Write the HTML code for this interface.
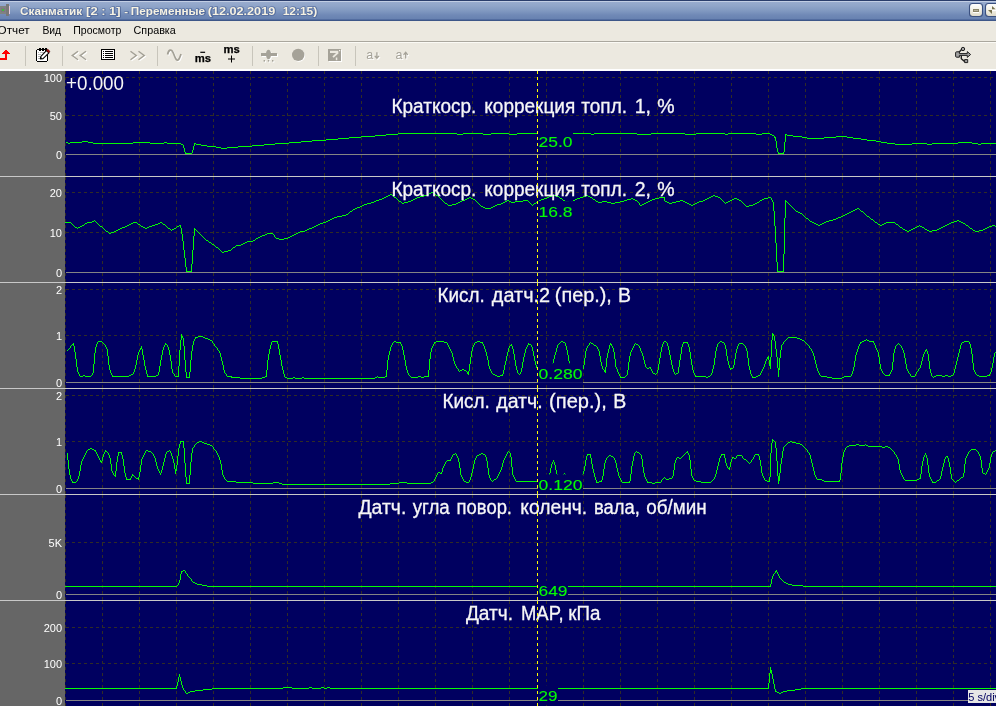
<!DOCTYPE html>
<html lang="ru"><head><meta charset="utf-8"><title>Сканматик</title>
<style>
html,body{margin:0;padding:0;background:#ece9e0;}
body{width:996px;height:706px;overflow:hidden;position:relative;font-family:"Liberation Sans",sans-serif;}
#title{position:absolute;left:0;top:0;width:996px;height:21px;background:linear-gradient(#2a3d6b 0,#2a3d6b 1px,#c2cee4 1px,#c2cee4 2px,#98abce 2px,#90a5c9 6px,#8098c0 11px,#7089b6 15px,#6882b1 19px,#536da0 19.5px,#3e5789 20px,#3e5789 21px);}
#title .t{position:absolute;left:21px;top:3px;font-size:11.5px;font-weight:bold;color:#f4f1e6;letter-spacing:-0.1px;white-space:nowrap;text-shadow:1px 1px 0 rgba(40,60,110,.6);}
#menu{position:absolute;left:0;top:21px;width:996px;height:20px;background:#ece9e0;font-size:11px;color:#000;}
#menu span{position:absolute;top:3px;white-space:nowrap;}
#sep1{position:absolute;left:0;top:41px;width:996px;height:1px;background:#aaa79e;}
#sep2{position:absolute;left:0;top:42px;width:996px;height:1px;background:#fbfaf5;z-index:1;}
#tool{position:absolute;left:0;top:42px;width:996px;height:27px;background:#ece9e0;}
#toolb{position:absolute;left:0;top:69px;width:996px;height:2px;background:#fff;}
#chart{position:absolute;left:0;top:71px;will-change:transform;}
#tb{will-change:transform;}
.vs{position:absolute;top:46px;width:1px;height:20px;background:#c9c6bc;}
</style></head><body>
<div id="title"></div>
<div id="menu"></div>
<div id="sep1"></div><div id="sep2"></div>
<div id="tool"></div>
<div id="toolb"></div>
<svg id="tb" width="996" height="71" viewBox="0 0 996 71" style="position:absolute;left:0;top:0">
<!-- title icon -->
<g shape-rendering="crispEdges"><rect x="0" y="6" width="6" height="8" fill="#828282"/><rect x="6" y="4" width="3" height="12" fill="#787878"/><rect x="9" y="6" width="1" height="8" fill="#e6cadf"/><rect x="1" y="8" width="4" height="4" fill="#7a6a80" opacity="0.5"/><rect x="2" y="9" width="2" height="2" fill="#3cc03c"/></g>
<g font-family="Liberation Sans, sans-serif" font-weight="bold" font-size="11.3">
<g fill="#3a5288" stroke="#3a5288" stroke-width="1.6" stroke-linejoin="round" opacity="0.55" transform="translate(-0.6,-0.6)"><text x="21.1" y="16" textLength="62.0" lengthAdjust="spacingAndGlyphs">Сканматик</text><text x="87.1" y="16" textLength="34.4" lengthAdjust="spacingAndGlyphs">[2 : 1]</text><text x="125.3" y="16">-</text><text x="131.8" y="16" textLength="74.3" lengthAdjust="spacingAndGlyphs">Переменные</text><text x="208.8" y="16" textLength="67.4" lengthAdjust="spacingAndGlyphs">(12.02.2019</text><text x="283.7" y="16" textLength="34.5" lengthAdjust="spacingAndGlyphs">12:15)</text></g>
<g fill="#f6f2e3"><text x="20.1" y="15" textLength="62.0" lengthAdjust="spacingAndGlyphs">Сканматик</text><text x="86.1" y="15" textLength="34.4" lengthAdjust="spacingAndGlyphs">[2 : 1]</text><text x="124.3" y="15">-</text><text x="130.8" y="15" textLength="74.3" lengthAdjust="spacingAndGlyphs">Переменные</text><text x="207.8" y="15" textLength="67.4" lengthAdjust="spacingAndGlyphs">(12.02.2019</text><text x="282.7" y="15" textLength="34.5" lengthAdjust="spacingAndGlyphs">12:15)</text></g>
</g>
<g font-family="Liberation Sans, sans-serif" font-size="11" fill="#000">
<text x="-2.4" y="34" textLength="32" lengthAdjust="spacingAndGlyphs">Отчет</text>
<text x="42.4" y="34" textLength="18.8" lengthAdjust="spacingAndGlyphs">Вид</text>
<text x="73.3" y="34" textLength="48" lengthAdjust="spacingAndGlyphs">Просмотр</text>
<text x="133.6" y="34" textLength="42.2" lengthAdjust="spacingAndGlyphs">Справка</text>
</g>
<!-- title buttons -->
<defs><linearGradient id="bg1" x1="0" y1="0" x2="0" y2="1"><stop offset="0" stop-color="#ffffff"/><stop offset="0.5" stop-color="#f3f1e6"/><stop offset="1" stop-color="#dcd8c6"/></linearGradient></defs>
<g>
<rect x="969.5" y="3.5" width="13" height="13" rx="3" ry="3" fill="url(#bg1)" stroke="#3a5080" stroke-width="1.1"/>
<rect x="973" y="9" width="6" height="3" fill="#8a8468"/>
<rect x="974" y="10" width="4" height="1" fill="#b4b09c"/>
<rect x="973" y="12" width="6" height="1" fill="#ffffff"/>
<rect x="985.5" y="3.5" width="13" height="13" rx="3" ry="3" fill="url(#bg1)" stroke="#3a5080" stroke-width="1.1"/>
<path d="M988 10 L992 10 L992 14 Z M992 6 L992 9.300 L995.500 9.300 Z" fill="#77724f"/>
<rect x="992" y="10" width="4" height="1" fill="#ffffff"/>
</g>
<!-- separators -->
<g stroke="#c8c5bb" stroke-width="1" shape-rendering="crispEdges">
<line x1="25.5" y1="46" x2="25.5" y2="66"/><line x1="62.5" y1="46" x2="62.5" y2="66"/><line x1="157.5" y1="46" x2="157.5" y2="66"/>
<line x1="252.5" y1="46" x2="252.5" y2="66"/><line x1="318.5" y1="46" x2="318.5" y2="66"/><line x1="355.5" y1="46" x2="355.5" y2="66"/>
</g>
<!-- red arrow -->
<g fill="#ff0000" shape-rendering="crispEdges"><rect x="5" y="50" width="2" height="1"/><rect x="4" y="51" width="4" height="1"/><rect x="3" y="52" width="6" height="1"/><rect x="2" y="53" width="8" height="1"/><rect x="5" y="54" width="2" height="6"/><rect x="0" y="58" width="7" height="2"/></g>
<!-- notepad -->
<g shape-rendering="crispEdges">
<rect x="37" y="50" width="10" height="11" fill="#ffffff"/>
<g fill="#000"><rect x="36" y="50" width="1" height="11"/><rect x="47" y="50" width="1" height="11"/><rect x="37" y="61" width="10" height="1"/><rect x="37" y="49" width="10" height="1"/>
<rect x="39" y="48" width="2" height="3"/><rect x="42" y="48" width="2" height="3"/><rect x="45" y="48" width="2" height="3"/></g>
<g fill="#b8b8b8"><rect x="38" y="52" width="1" height="1"/><rect x="40" y="52" width="4" height="1"/><rect x="38" y="54" width="3" height="1"/><rect x="38" y="56" width="2" height="1"/><rect x="38" y="58" width="2" height="1"/></g>
</g>
<path d="M40.3 58.9 L40.9 56.3 L46.4 50.6 L48.9 52.9 L43.1 58.6 Z" fill="#fff" stroke="#000" stroke-width="1.1" stroke-linejoin="round"/>
<path d="M40.2 59 L40.7 56.8 L42.4 58.6 Z" fill="#000"/>
<path d="M46.3 50.5 L47.7 49.1 L50 51.4 L48.8 52.9 Z" fill="#a00808" stroke="#300" stroke-width="0.5"/>
<!-- << >> -->
<g fill="none" stroke-width="1.4" stroke-linejoin="miter">
<g stroke="#ffffff" transform="translate(1,1)"><path d="M78 51.2 L72.2 55.6 L78 59.8 M86 51.2 L80.2 55.6 L86 59.8"/><path d="M130.5 51.2 L136.3 55.6 L130.5 59.8 M138.5 51.2 L144.3 55.6 L138.5 59.8"/></g>
<g stroke="#a3a095"><path d="M78 51.2 L72.2 55.6 L78 59.8 M86 51.2 L80.2 55.6 L86 59.8"/><path d="M130.5 51.2 L136.3 55.6 L130.5 59.8 M138.5 51.2 L144.3 55.6 L138.5 59.8"/></g>
</g>
<!-- list icon -->
<g shape-rendering="crispEdges">
<rect x="101" y="49" width="14" height="11" fill="#000"/>
<rect x="102" y="50" width="12" height="9" fill="#fff"/>
<rect x="103" y="51" width="1" height="1" fill="#000"/><rect x="105" y="51" width="8" height="1" fill="#000"/>
<rect x="103" y="53" width="1" height="1" fill="#000"/><rect x="105" y="53" width="8" height="1" fill="#000"/>
<rect x="103" y="55" width="1" height="1" fill="#000"/><rect x="105" y="55" width="8" height="1" fill="#000"/>
<rect x="103" y="57" width="1" height="1" fill="#000"/><rect x="105" y="57" width="8" height="1" fill="#000"/>
</g>
<!-- sine -->
<path d="M167.6 54.5 C168.6 49.5 171.3 48.3 173.3 53 C175 57.5 176.8 63 179.3 58.5 C180.2 56.5 180.6 55.5 181 54" fill="none" stroke="#fff" stroke-width="1.6" transform="translate(1,1)"/>
<path d="M167.6 54.5 C168.6 49.5 171.3 48.3 173.3 53 C175 57.5 176.8 63 179.3 58.5 C180.2 56.5 180.6 55.5 181 54" fill="none" stroke="#a3a095" stroke-width="1.7"/>
<!-- ms - -->
<g font-family="Liberation Sans, sans-serif" font-weight="bold" font-size="11.5" fill="#000" stroke="#000" stroke-width="0.25">
<rect x="200.3" y="51.7" width="4.8" height="1.2" fill="#000" stroke="none"/>
<text x="194.8" y="61.6" textLength="16.3" lengthAdjust="spacingAndGlyphs">ms</text>
<text x="223.6" y="52.6" textLength="16.3" lengthAdjust="spacingAndGlyphs">ms</text>
<rect x="228" y="58.5" width="7" height="1" fill="#000" stroke="none"/><rect x="231" y="55.5" width="1" height="7" fill="#000" stroke="none"/>
</g>
<!-- plane icon -->
<g fill="#ffffff" transform="translate(1,1)"><rect x="261" y="53" width="16" height="3"/><path d="M268.5 49.8 C270 49.8 271 51.5 271 54 C271 56.5 270.3 59.3 268.5 59.3 C266.7 59.3 266 56.5 266 54 C266 51.5 267 49.8 268.5 49.8 Z"/><rect x="263.6" y="60" width="1.4" height="1.6"/><rect x="267.8" y="60" width="1.4" height="1.6"/><rect x="272" y="60" width="1.4" height="1.6"/></g>
<g fill="#a5a298"><rect x="261" y="53" width="16" height="3"/><path d="M268.5 49.8 C270 49.8 271 51.5 271 54 C271 56.5 270.3 59.3 268.5 59.3 C266.7 59.3 266 56.5 266 54 C266 51.5 267 49.8 268.5 49.8 Z"/><rect x="263.6" y="60" width="1.4" height="1.6"/><rect x="267.8" y="60" width="1.4" height="1.6"/><rect x="272" y="60" width="1.4" height="1.6"/></g>
<circle cx="299" cy="55.8" r="6.1" fill="#ffffff"/>
<circle cx="298.2" cy="54.9" r="6.2" fill="#a5a298"/>
<!-- picture icon -->
<g>
<rect x="329" y="50" width="13" height="12" fill="#ffffff"/>
<rect x="328" y="49" width="13" height="12" fill="#a5a298"/>
<path d="M330 50.8 h8.3 v2.2 h-8.3 z" fill="#ece9e0"/>
<path d="M338 52.5 L333 57.2" stroke="#ece9e0" stroke-width="1.8" fill="none"/>
<rect x="335.8" y="57.5" width="1.5" height="2.7" fill="#ece9e0"/>
<rect x="339" y="50" width="1.2" height="1.2" fill="#f6f4ee"/>
</g>
<!-- a down / a up -->
<g font-family="Liberation Sans, sans-serif" font-size="12.6" font-weight="bold" fill="#ffffff" stroke="#ffffff" transform="translate(1,1)"><text x="366.3" y="58.6" stroke="none" font-weight="normal">a</text><text x="395.5" y="58.6" stroke="none" font-weight="normal">a</text>
<path d="M376.9 52.3 V58 M374.8 55.8 L376.9 58.3 L379 55.8" fill="none" stroke-width="1.3"/>
<path d="M405.7 58.6 V52.6 M403.6 54.8 L405.7 52.2 L407.8 54.8" fill="none" stroke-width="1.3"/></g>
<g font-family="Liberation Sans, sans-serif" font-size="12.6" font-weight="bold" fill="#a5a298" stroke="#a5a298"><text x="366.3" y="58.6" stroke="none" font-weight="normal">a</text><text x="395.5" y="58.6" stroke="none" font-weight="normal">a</text>
<path d="M376.9 52.3 V58 M374.8 55.8 L376.9 58.3 L379 55.8" fill="none" stroke-width="1.3"/>
<path d="M405.7 58.6 V52.6 M403.6 54.8 L405.7 52.2 L407.8 54.8" fill="none" stroke-width="1.3"/></g>
<!-- usb -->
<g stroke="#202020" stroke-width="1" fill="#a2a2a2" stroke-linejoin="round">
<path d="M959 52.3 L962.3 48.8" fill="none" stroke-width="1.4"/>
<path d="M961.3 55.5 V58.8 L964.8 61.6" fill="none" stroke-width="1.4"/>
<path d="M956.6 51.8 h2.8 v1.8 H967.3 V51.6 L970.6 54.5 L967.3 57.4 V55.4 H959.4 v1.8 h-2.8 q-1 0 -1 -1 v-3.400 q0 -1 1 -1 z"/>
<circle cx="963" cy="49" r="1.7"/>
<rect x="964.6" y="59.6" width="3.100" height="3"/>
</g>
</svg>

<svg id="chart" width="996" height="635" viewBox="0 0 996 635" shape-rendering="crispEdges">
<g transform="translate(0,-71)">
<rect x="0" y="71" width="65" height="635" fill="#666666"/>
<rect x="65" y="71" width="931" height="635" fill="#000060"/>
<path d="M65.5 71V176M102.5 71V176M139.5 71V176M176.5 71V176M213.5 71V176M250.5 71V176M287.5 71V176M324.5 71V176M361.5 71V176M398.5 71V176M435.5 71V176M472.5 71V176M509.5 71V176M546.5 71V176M583.5 71V176M620.5 71V176M657.5 71V176M694.5 71V176M731.5 71V176M768.5 71V176M805.5 71V176M842.5 71V176M879.5 71V176M916.5 71V176M953.5 71V176M990.5 71V176M65.5 177V282M102.5 177V282M139.5 177V282M176.5 177V282M213.5 177V282M250.5 177V282M287.5 177V282M324.5 177V282M361.5 177V282M398.5 177V282M435.5 177V282M472.5 177V282M509.5 177V282M546.5 177V282M583.5 177V282M620.5 177V282M657.5 177V282M694.5 177V282M731.5 177V282M768.5 177V282M805.5 177V282M842.5 177V282M879.5 177V282M916.5 177V282M953.5 177V282M990.5 177V282M65.5 283V388M102.5 283V388M139.5 283V388M176.5 283V388M213.5 283V388M250.5 283V388M287.5 283V388M324.5 283V388M361.5 283V388M398.5 283V388M435.5 283V388M472.5 283V388M509.5 283V388M546.5 283V388M583.5 283V388M620.5 283V388M657.5 283V388M694.5 283V388M731.5 283V388M768.5 283V388M805.5 283V388M842.5 283V388M879.5 283V388M916.5 283V388M953.5 283V388M990.5 283V388M65.5 389V494M102.5 389V494M139.5 389V494M176.5 389V494M213.5 389V494M250.5 389V494M287.5 389V494M324.5 389V494M361.5 389V494M398.5 389V494M435.5 389V494M472.5 389V494M509.5 389V494M546.5 389V494M583.5 389V494M620.5 389V494M657.5 389V494M694.5 389V494M731.5 389V494M768.5 389V494M805.5 389V494M842.5 389V494M879.5 389V494M916.5 389V494M953.5 389V494M990.5 389V494M65.5 495V600M102.5 495V600M139.5 495V600M176.5 495V600M213.5 495V600M250.5 495V600M287.5 495V600M324.5 495V600M361.5 495V600M398.5 495V600M435.5 495V600M472.5 495V600M509.5 495V600M546.5 495V600M583.5 495V600M620.5 495V600M657.5 495V600M694.5 495V600M731.5 495V600M768.5 495V600M805.5 495V600M842.5 495V600M879.5 495V600M916.5 495V600M953.5 495V600M990.5 495V600M65.5 601V706M102.5 601V706M139.5 601V706M176.5 601V706M213.5 601V706M250.5 601V706M287.5 601V706M324.5 601V706M361.5 601V706M398.5 601V706M435.5 601V706M472.5 601V706M509.5 601V706M546.5 601V706M583.5 601V706M620.5 601V706M657.5 601V706M694.5 601V706M731.5 601V706M768.5 601V706M805.5 601V706M842.5 601V706M879.5 601V706M916.5 601V706M953.5 601V706M990.5 601V706" fill="none" stroke="#302c26" stroke-width="1" stroke-dasharray="3 3"/>
<line x1="66" y1="77.5" x2="996" y2="77.5" stroke="#302c26" stroke-width="1" stroke-dasharray="3 3"/>
<line x1="66" y1="115.5" x2="996" y2="115.5" stroke="#302c26" stroke-width="1" stroke-dasharray="3 3"/>
<line x1="66" y1="192.5" x2="996" y2="192.5" stroke="#302c26" stroke-width="1" stroke-dasharray="3 3"/>
<line x1="66" y1="232.5" x2="996" y2="232.5" stroke="#302c26" stroke-width="1" stroke-dasharray="3 3"/>
<line x1="66" y1="289.5" x2="996" y2="289.5" stroke="#302c26" stroke-width="1" stroke-dasharray="3 3"/>
<line x1="66" y1="335.5" x2="996" y2="335.5" stroke="#302c26" stroke-width="1" stroke-dasharray="3 3"/>
<line x1="66" y1="395.5" x2="996" y2="395.5" stroke="#302c26" stroke-width="1" stroke-dasharray="3 3"/>
<line x1="66" y1="441.5" x2="996" y2="441.5" stroke="#302c26" stroke-width="1" stroke-dasharray="3 3"/>
<line x1="66" y1="542.5" x2="996" y2="542.5" stroke="#302c26" stroke-width="1" stroke-dasharray="3 3"/>
<line x1="66" y1="627.5" x2="996" y2="627.5" stroke="#302c26" stroke-width="1" stroke-dasharray="3 3"/>
<line x1="66" y1="663.5" x2="996" y2="663.5" stroke="#302c26" stroke-width="1" stroke-dasharray="3 3"/>
<line x1="66" y1="154.5" x2="996" y2="154.5" stroke="#848484" stroke-width="1"/>
<line x1="66" y1="272.5" x2="996" y2="272.5" stroke="#848484" stroke-width="1"/>
<line x1="66" y1="382.5" x2="996" y2="382.5" stroke="#848484" stroke-width="1"/>
<line x1="66" y1="488.5" x2="996" y2="488.5" stroke="#848484" stroke-width="1"/>
<line x1="66" y1="594.5" x2="996" y2="594.5" stroke="#848484" stroke-width="1"/>
<line x1="66" y1="700.5" x2="996" y2="700.5" stroke="#848484" stroke-width="1"/>
<g fill="none" stroke="#04fb04" stroke-width="1" shape-rendering="crispEdges">
<path d="M183.5 145v3M184.5 148v4M185.5 152v2M192.5 150v3M193.5 146v4M194.5 143v3M774.5 136v2M775.5 137v4M776.5 141v7M777.5 148v4M778.5 152v2M783.5 152v2M784.5 142v10M785.5 134v8M66 142.5h2M70 142.5h12M88 142.5h5M133 142.5h17M164 142.5h3M289 142.5h12M881 142.5h6M958 142.5h14M68 143.5h2M93 143.5h40M150 143.5h14M167 143.5h14M195 143.5h1M275 143.5h14M887 143.5h8M912 143.5h15M932 143.5h26M972 143.5h6M981 143.5h15M82 141.5h6M301 141.5h11M876 141.5h5M181 144.5h2M196 144.5h5M264 144.5h11M895 144.5h17M927 144.5h5M978 144.5h3M186 153.5h6M779 153.5h4M201 145.5h6M252 145.5h12M207 146.5h9M238 146.5h14M216 147.5h5M227 147.5h11M221 148.5h6M312 140.5h14M867 140.5h9M326 139.5h12M861 139.5h6M338 138.5h11M807 138.5h17M853 138.5h8M349 137.5h12M802 137.5h5M824 137.5h12M847 137.5h6M361 136.5h14M793 136.5h9M836 136.5h11M375 135.5h11M772 135.5h2M787 135.5h6M386 134.5h12M457 134.5h6M483 134.5h8M509 134.5h8M591 134.5h3M637 134.5h14M685 134.5h11M725 134.5h3M756 134.5h6M770 134.5h2M786 134.5h1M398 133.5h59M463 133.5h20M491 133.5h18M517 133.5h74M594 133.5h43M651 133.5h34M696 133.5h29M728 133.5h28M762 133.5h8"/>
<path d="M180.5 225v3M181.5 228v6M182.5 234v7M183.5 241v9M184.5 250v8M185.5 258v9M186.5 267v5M191.5 264v8M192.5 250v14M193.5 236v14M194.5 228v8M274.5 235v2M639.5 203v2M664.5 197v4M771.5 198v2M772.5 200v2M773.5 202v9M774.5 211v15M775.5 226v17M776.5 243v19M777.5 262v10M783.5 254v18M784.5 218v36M785.5 200v18M65 222.5h6M87 222.5h5M96 222.5h1M133 222.5h4M160 222.5h2M323 222.5h3M812 222.5h2M824 222.5h2M875 222.5h2M886 222.5h9M951 222.5h3M961 222.5h2M71 223.5h1M85 223.5h2M97 223.5h1M131 223.5h2M137 223.5h1M158 223.5h2M162 223.5h1M320 223.5h3M814 223.5h2M822 223.5h2M877 223.5h1M884 223.5h2M895 223.5h1M949 223.5h2M963 223.5h2M72 224.5h1M84 224.5h1M98 224.5h1M129 224.5h2M138 224.5h2M155 224.5h3M163 224.5h2M318 224.5h2M816 224.5h2M820 224.5h2M878 224.5h2M882 224.5h2M896 224.5h2M947 224.5h2M965 224.5h1M73 225.5h1M82 225.5h2M99 225.5h1M127 225.5h2M140 225.5h1M152 225.5h3M165 225.5h1M179 225.5h1M316 225.5h2M818 225.5h2M880 225.5h2M898 225.5h1M919 225.5h1M945 225.5h2M966 225.5h2M992 225.5h3M74 226.5h1M80 226.5h2M100 226.5h2M125 226.5h2M141 226.5h2M149 226.5h3M166 226.5h1M177 226.5h2M314 226.5h2M899 226.5h1M917 226.5h2M920 226.5h2M943 226.5h2M968 226.5h1M989 226.5h3M995 226.5h1M75 227.5h2M78 227.5h2M102 227.5h1M122 227.5h3M143 227.5h2M147 227.5h2M167 227.5h1M176 227.5h1M312 227.5h2M900 227.5h2M915 227.5h2M922 227.5h2M941 227.5h2M969 227.5h1M987 227.5h2M77 228.5h1M103 228.5h1M120 228.5h2M145 228.5h2M168 228.5h2M174 228.5h2M309 228.5h3M902 228.5h1M913 228.5h2M924 228.5h1M939 228.5h2M970 228.5h2M985 228.5h2M92 221.5h2M95 221.5h1M326 221.5h2M810 221.5h2M826 221.5h3M874 221.5h1M954 221.5h3M959 221.5h2M94 220.5h1M328 220.5h2M809 220.5h1M829 220.5h4M873 220.5h1M957 220.5h2M104 229.5h1M118 229.5h2M170 229.5h1M172 229.5h2M195 229.5h1M307 229.5h2M903 229.5h2M911 229.5h2M925 229.5h2M937 229.5h2M972 229.5h1M983 229.5h2M105 230.5h1M116 230.5h2M171 230.5h1M196 230.5h1M305 230.5h2M905 230.5h2M909 230.5h2M927 230.5h2M932 230.5h5M973 230.5h2M979 230.5h4M106 231.5h2M114 231.5h2M197 231.5h1M300 231.5h5M907 231.5h2M929 231.5h3M975 231.5h4M108 232.5h1M111 232.5h3M198 232.5h1M298 232.5h2M109 233.5h2M199 233.5h1M267 233.5h6M296 233.5h2M187 271.5h4M778 271.5h5M200 234.5h1M265 234.5h2M273 234.5h1M294 234.5h2M201 235.5h1M262 235.5h3M292 235.5h2M202 236.5h1M260 236.5h2M290 236.5h2M203 237.5h1M258 237.5h2M275 237.5h1M288 237.5h2M204 238.5h1M256 238.5h2M276 238.5h3M284 238.5h4M205 239.5h1M255 239.5h1M279 239.5h5M206 240.5h2M253 240.5h2M208 241.5h1M247 241.5h6M209 242.5h2M245 242.5h2M211 243.5h1M243 243.5h2M212 244.5h2M241 244.5h2M214 245.5h1M236 245.5h5M215 246.5h1M235 246.5h1M216 247.5h2M233 247.5h2M218 248.5h1M232 248.5h1M219 249.5h1M231 249.5h1M220 250.5h1M228 250.5h3M221 251.5h1M224 251.5h4M222 252.5h2M330 219.5h2M808 219.5h1M833 219.5h3M871 219.5h2M332 218.5h2M806 218.5h2M836 218.5h2M870 218.5h1M334 217.5h3M805 217.5h1M838 217.5h3M869 217.5h1M337 216.5h5M804 216.5h1M841 216.5h2M867 216.5h2M342 215.5h4M803 215.5h1M843 215.5h2M866 215.5h1M346 214.5h2M802 214.5h1M845 214.5h2M865 214.5h1M348 213.5h1M800 213.5h2M847 213.5h2M864 213.5h1M349 212.5h1M798 212.5h2M849 212.5h2M863 212.5h1M350 211.5h2M796 211.5h2M851 211.5h2M861 211.5h2M352 210.5h1M795 210.5h1M853 210.5h2M860 210.5h1M353 209.5h2M794 209.5h1M855 209.5h2M859 209.5h1M355 208.5h2M485 208.5h6M793 208.5h1M857 208.5h2M357 207.5h3M483 207.5h2M491 207.5h2M792 207.5h1M360 206.5h2M481 206.5h2M493 206.5h2M746 206.5h3M791 206.5h1M362 205.5h2M448 205.5h4M480 205.5h1M495 205.5h2M532 205.5h1M640 205.5h2M691 205.5h2M745 205.5h1M749 205.5h4M790 205.5h1M364 204.5h3M447 204.5h1M452 204.5h4M479 204.5h1M497 204.5h4M531 204.5h1M533 204.5h1M642 204.5h2M689 204.5h2M693 204.5h2M744 204.5h1M753 204.5h2M789 204.5h1M367 203.5h4M402 203.5h2M445 203.5h2M456 203.5h2M478 203.5h1M501 203.5h2M530 203.5h1M534 203.5h2M611 203.5h4M644 203.5h2M669 203.5h3M687 203.5h2M695 203.5h2M725 203.5h1M743 203.5h1M755 203.5h2M788 203.5h1M371 202.5h3M401 202.5h1M404 202.5h4M444 202.5h1M458 202.5h2M477 202.5h1M503 202.5h2M511 202.5h4M529 202.5h1M536 202.5h1M569 202.5h2M598 202.5h4M607 202.5h4M615 202.5h5M638 202.5h1M646 202.5h2M667 202.5h2M672 202.5h4M685 202.5h2M697 202.5h2M724 202.5h1M726 202.5h2M742 202.5h1M757 202.5h2M787 202.5h1M374 201.5h2M399 201.5h2M408 201.5h3M443 201.5h1M460 201.5h2M476 201.5h1M505 201.5h2M509 201.5h2M515 201.5h8M528 201.5h1M537 201.5h2M565 201.5h4M571 201.5h2M596 201.5h2M602 201.5h5M620 201.5h4M637 201.5h1M648 201.5h2M665 201.5h2M676 201.5h4M683 201.5h2M699 201.5h4M723 201.5h1M728 201.5h2M741 201.5h1M759 201.5h1M786 201.5h1M376 200.5h3M398 200.5h1M411 200.5h2M442 200.5h1M462 200.5h3M475 200.5h1M507 200.5h2M523 200.5h5M539 200.5h2M563 200.5h2M573 200.5h2M595 200.5h1M624 200.5h3M635 200.5h2M650 200.5h2M680 200.5h3M703 200.5h2M722 200.5h1M730 200.5h2M739 200.5h2M760 200.5h2M379 199.5h3M397 199.5h1M413 199.5h2M441 199.5h1M465 199.5h2M473 199.5h2M541 199.5h3M562 199.5h1M575 199.5h2M593 199.5h2M627 199.5h4M633 199.5h2M652 199.5h3M705 199.5h2M721 199.5h1M732 199.5h2M737 199.5h2M762 199.5h2M382 198.5h2M396 198.5h1M415 198.5h2M440 198.5h1M467 198.5h2M471 198.5h2M544 198.5h3M560 198.5h2M577 198.5h3M592 198.5h1M631 198.5h2M655 198.5h4M707 198.5h2M720 198.5h1M734 198.5h3M764 198.5h4M384 197.5h2M394 197.5h2M417 197.5h3M439 197.5h1M469 197.5h2M547 197.5h2M559 197.5h1M580 197.5h3M590 197.5h2M659 197.5h5M709 197.5h2M718 197.5h2M768 197.5h3M386 196.5h2M393 196.5h1M420 196.5h4M438 196.5h1M549 196.5h3M556 196.5h3M583 196.5h3M588 196.5h2M711 196.5h2M715 196.5h3M388 195.5h2M392 195.5h1M424 195.5h3M436 195.5h2M552 195.5h4M586 195.5h2M713 195.5h2M390 194.5h2M427 194.5h2M435 194.5h1M429 193.5h2M433 193.5h2M431 192.5h2"/>
<path d="M70.5 346v2M73.5 343v3M74.5 346v6M75.5 352v7M76.5 359v8M77.5 367v5M78.5 372v2M79.5 374v2M92.5 373v2M93.5 364v9M94.5 353v11M95.5 347v6M96.5 344v3M97.5 342v2M105.5 345v2M106.5 347v2M107.5 349v7M108.5 356v9M109.5 365v5M110.5 370v3M111.5 373v2M112.5 375v2M133.5 372v2M134.5 369v3M135.5 365v4M136.5 360v5M137.5 355v5M138.5 352v3M139.5 350v2M140.5 348v2M141.5 346v3M142.5 349v6M143.5 355v5M144.5 360v6M145.5 366v4M146.5 370v4M147.5 374v3M158.5 372v3M159.5 366v6M160.5 360v6M161.5 355v5M162.5 350v5M163.5 347v3M164.5 345v2M165.5 343v2M167.5 345v2M168.5 347v3M169.5 350v5M170.5 355v6M171.5 361v8M172.5 369v4M174.5 374v2M178.5 366v11M179.5 350v16M180.5 340v10M181.5 334v6M182.5 336v2M183.5 338v8M184.5 346v14M185.5 360v12M186.5 372v6M189.5 372v6M190.5 360v12M191.5 351v9M192.5 345v6M193.5 341v4M194.5 339v2M195.5 337v2M212.5 341v2M214.5 344v2M217.5 348v2M219.5 351v2M220.5 353v4M221.5 357v4M222.5 361v4M223.5 365v5M224.5 370v3M226.5 374v2M231.5 376v2M266.5 370v7M267.5 360v10M268.5 354v6M269.5 349v5M270.5 345v4M271.5 342v3M277.5 341v3M278.5 344v5M279.5 349v6M280.5 355v5M281.5 360v6M282.5 366v4M283.5 370v4M284.5 374v3M386.5 370v7M387.5 360v10M388.5 355v5M389.5 351v4M390.5 347v4M391.5 345v2M392.5 343v2M400.5 342v2M401.5 344v2M402.5 346v4M403.5 350v5M404.5 355v5M405.5 360v6M406.5 366v4M407.5 370v3M408.5 373v2M428.5 370v7M429.5 359v11M430.5 352v7M431.5 348v4M432.5 346v2M433.5 344v2M434.5 342v2M447.5 343v2M448.5 345v2M449.5 347v2M450.5 349v2M451.5 351v2M452.5 353v4M453.5 357v4M454.5 361v3M455.5 364v2M456.5 366v2M458.5 369v2M467.5 372v2M468.5 371v4M469.5 364v7M470.5 357v7M471.5 351v6M472.5 347v4M473.5 345v2M474.5 343v2M482.5 342v2M483.5 344v2M484.5 346v3M485.5 349v3M486.5 352v4M487.5 356v4M488.5 360v6M489.5 366v3M490.5 369v2M491.5 371v2M502.5 374v2M503.5 370v4M504.5 365v5M505.5 361v4M506.5 356v5M507.5 352v4M508.5 348v4M509.5 346v2M511.5 344v2M512.5 346v3M513.5 349v5M514.5 354v6M515.5 360v6M516.5 366v4M517.5 370v3M520.5 372v2M521.5 368v4M522.5 362v6M523.5 357v5M524.5 353v4M525.5 349v4M526.5 347v2M527.5 345v2M528.5 343v2M531.5 345v2M532.5 347v4M533.5 351v5M534.5 356v5M535.5 361v4M536.5 365v3M537.5 368v2M538.5 370v2M539.5 372v2M540.5 374v2M550.5 371v2M551.5 367v4M552.5 363v4M553.5 359v4M554.5 355v4M555.5 352v3M556.5 348v4M557.5 345v3M565.5 343v3M566.5 346v4M567.5 350v5M568.5 355v6M569.5 361v5M570.5 366v5M571.5 371v3M580.5 373v2M581.5 371v2M582.5 369v2M583.5 365v4M584.5 358v7M585.5 351v7M586.5 348v3M587.5 346v2M589.5 343v2M597.5 347v2M598.5 349v2M599.5 351v5M600.5 356v6M601.5 362v4M602.5 366v3M604.5 370v2M605.5 367v6M606.5 358v9M607.5 353v5M608.5 349v4M609.5 345v4M610.5 343v2M611.5 344v2M612.5 346v2M613.5 348v4M614.5 352v7M615.5 359v8M616.5 367v2M617.5 369v3M618.5 372v2M619.5 374v2M620.5 376v2M627.5 370v5M628.5 362v8M629.5 356v6M630.5 352v4M631.5 350v2M632.5 348v2M633.5 346v2M634.5 344v2M639.5 346v2M640.5 348v3M641.5 351v2M642.5 353v3M643.5 356v4M644.5 360v4M645.5 364v3M650.5 367v2M651.5 369v2M652.5 371v2M657.5 370v3M658.5 364v6M659.5 358v6M660.5 352v6M661.5 347v5M662.5 344v3M663.5 342v2M667.5 343v3M668.5 346v4M669.5 350v5M670.5 355v5M671.5 360v5M672.5 365v4M673.5 369v3M674.5 372v2M678.5 367v6M679.5 360v7M680.5 354v6M681.5 347v7M682.5 344v3M683.5 342v2M687.5 342v2M688.5 344v3M689.5 347v5M690.5 352v7M691.5 359v6M692.5 365v5M693.5 370v3M694.5 373v2M695.5 375v2M711.5 373v2M712.5 369v4M713.5 365v4M714.5 358v7M715.5 351v7M716.5 347v4M717.5 344v3M724.5 343v2M725.5 345v4M726.5 349v7M727.5 356v5M728.5 361v4M729.5 365v3M730.5 368v2M733.5 365v3M734.5 359v6M735.5 353v6M736.5 349v4M737.5 346v3M738.5 344v2M745.5 346v2M746.5 348v3M747.5 351v7M748.5 358v8M749.5 366v4M750.5 370v4M751.5 374v2M752.5 376v2M760.5 373v2M761.5 371v2M762.5 369v2M763.5 367v2M764.5 364v3M765.5 361v3M766.5 359v2M767.5 357v2M768.5 356v4M769.5 360v6M770.5 357v12M771.5 340v17M772.5 333v7M773.5 334v2M774.5 336v5M775.5 341v8M776.5 349v8M777.5 357v11M778.5 368v9M779.5 358v12M780.5 350v8M781.5 345v5M783.5 342v2M809.5 346v2M811.5 349v2M812.5 351v2M813.5 353v3M814.5 356v4M815.5 360v4M816.5 364v4M817.5 368v3M818.5 371v2M819.5 373v2M851.5 374v2M852.5 371v3M853.5 367v4M854.5 361v6M855.5 355v6M856.5 352v3M857.5 349v3M858.5 346v3M859.5 344v2M860.5 342v2M873.5 341v2M874.5 343v2M875.5 345v3M876.5 348v2M877.5 350v2M878.5 352v5M879.5 357v7M880.5 364v5M881.5 369v2M882.5 371v2M889.5 374v2M890.5 372v2M891.5 370v2M892.5 362v8M893.5 353v9M894.5 349v4M895.5 346v3M901.5 346v2M902.5 348v2M903.5 350v3M904.5 353v5M905.5 358v6M906.5 364v5M907.5 369v2M908.5 371v2M910.5 374v2M915.5 374v2M916.5 372v2M918.5 369v2M920.5 365v3M921.5 361v4M922.5 357v4M923.5 354v3M924.5 352v2M925.5 350v2M926.5 349v2M927.5 351v3M928.5 354v7M929.5 361v8M930.5 369v4M931.5 373v3M953.5 373v2M954.5 369v4M955.5 365v4M956.5 361v4M957.5 357v4M958.5 353v4M959.5 349v4M960.5 345v4M961.5 343v2M969.5 342v2M970.5 344v4M971.5 348v6M972.5 354v9M973.5 363v7M974.5 370v2M975.5 372v2M989.5 374v2M990.5 372v2M991.5 368v4M992.5 363v5M993.5 357v6M994.5 353v4M67 350.5h1M218 350.5h1M68 349.5h1M69 348.5h1M810 348.5h1M71 345.5h1M510 345.5h1M588 345.5h1M594 345.5h2M638 345.5h1M744 345.5h1M808 345.5h1M896 345.5h1M900 345.5h1M72 344.5h1M104 344.5h1M166 344.5h1M529 344.5h2M558 344.5h1M593 344.5h1M636 344.5h2M743 344.5h1M782 344.5h1M807 344.5h1M897 344.5h1M899 344.5h1M80 376.5h3M85 376.5h6M113 376.5h16M148 376.5h8M175 376.5h3M227 376.5h4M265 376.5h1M377 376.5h1M385 376.5h1M410 376.5h1M418 376.5h3M424 376.5h4M497 376.5h3M542 376.5h2M546 376.5h1M575 376.5h1M577 376.5h1M625 376.5h1M696 376.5h10M708 376.5h2M756 376.5h2M821 376.5h6M844 376.5h7M911 376.5h4M932 376.5h1M934 376.5h2M942 376.5h3M948 376.5h3M979 376.5h8M83 375.5h2M91 375.5h1M129 375.5h2M156 375.5h2M409 375.5h1M495 375.5h2M500 375.5h2M541 375.5h1M547 375.5h1M573 375.5h2M578 375.5h2M626 375.5h1M710 375.5h1M758 375.5h2M820 375.5h1M885 375.5h4M936 375.5h6M945 375.5h3M951 375.5h2M977 375.5h2M987 375.5h2M98 341.5h4M272 341.5h5M394 341.5h2M436 341.5h8M477 341.5h3M561 341.5h2M664 341.5h2M720 341.5h2M784 341.5h1M804 341.5h1M862 341.5h2M869 341.5h4M964 341.5h5M102 342.5h1M393 342.5h1M396 342.5h4M435 342.5h1M444 342.5h3M475 342.5h2M480 342.5h2M560 342.5h1M563 342.5h2M590 342.5h1M666 342.5h1M684 342.5h3M719 342.5h1M722 342.5h2M805 342.5h1M861 342.5h1M962 342.5h2M103 343.5h1M213 343.5h1M559 343.5h1M591 343.5h2M635 343.5h1M718 343.5h1M739 343.5h4M806 343.5h1M898 343.5h1M131 374.5h2M493 374.5h2M519 374.5h1M548 374.5h1M572 374.5h1M655 374.5h1M675 374.5h1M884 374.5h1M976 374.5h1M173 373.5h1M225 373.5h1M492 373.5h1M518 373.5h1M549 373.5h1M653 373.5h2M656 373.5h1M676 373.5h2M883 373.5h1M909 373.5h1M187 377.5h2M232 377.5h8M262 377.5h3M285 377.5h2M293 377.5h2M302 377.5h2M375 377.5h2M378 377.5h7M411 377.5h7M421 377.5h3M544 377.5h2M576 377.5h1M621 377.5h4M706 377.5h2M753 377.5h3M827 377.5h5M842 377.5h2M933 377.5h1M196 337.5h2M203 337.5h2M788 337.5h9M198 336.5h5M205 338.5h3M787 338.5h1M797 338.5h3M208 339.5h2M786 339.5h1M800 339.5h2M866 339.5h1M210 340.5h2M785 340.5h1M802 340.5h2M864 340.5h2M867 340.5h2M215 346.5h1M596 346.5h1M216 347.5h1M240 378.5h22M287 378.5h6M295 378.5h7M304 378.5h71M832 378.5h10M457 368.5h1M647 368.5h2M731 368.5h2M919 368.5h1M459 371.5h1M466 371.5h1M917 371.5h1M460 370.5h2M464 370.5h2M462 369.5h2M603 369.5h1M646 367.5h1M649 367.5h1M995 352.5h1"/>
<path d="M67.5 453v7M68.5 460v9M69.5 469v6M70.5 475v4M71.5 479v2M72.5 481v2M77.5 479v2M78.5 476v3M79.5 471v5M80.5 465v6M81.5 461v4M82.5 459v2M83.5 457v2M84.5 455v2M85.5 453v2M86.5 451v2M95.5 450v2M96.5 452v2M97.5 454v2M98.5 456v2M99.5 458v2M100.5 460v2M101.5 461v2M102.5 457v4M103.5 454v3M104.5 452v2M105.5 450v2M108.5 453v2M109.5 455v3M110.5 458v6M111.5 464v7M112.5 471v2M113.5 473v2M115.5 471v6M116.5 462v9M117.5 456v6M118.5 452v4M121.5 452v3M122.5 455v4M123.5 459v7M124.5 466v7M125.5 473v4M126.5 477v3M130.5 478v2M131.5 476v2M132.5 474v2M138.5 477v3M139.5 472v5M140.5 465v7M141.5 459v6M142.5 457v2M143.5 455v2M144.5 453v2M145.5 451v2M153.5 454v2M154.5 456v2M155.5 458v4M156.5 462v4M157.5 466v3M158.5 469v2M159.5 471v2M160.5 473v2M161.5 470v3M162.5 466v4M163.5 462v4M164.5 458v4M165.5 454v4M166.5 452v2M170.5 451v2M171.5 453v3M172.5 456v3M173.5 459v4M174.5 463v6M175.5 469v5M176.5 465v6M177.5 456v9M178.5 448v8M179.5 444v4M180.5 441v3M183.5 441v7M184.5 448v15M185.5 463v14M186.5 477v7M189.5 475v9M190.5 462v13M191.5 453v9M192.5 448v5M194.5 445v2M213.5 447v2M216.5 451v2M217.5 453v2M218.5 455v2M219.5 457v3M220.5 460v4M221.5 464v6M222.5 470v5M223.5 475v2M224.5 477v2M434.5 479v2M435.5 477v2M436.5 475v2M437.5 473v2M441.5 472v2M442.5 468v4M443.5 466v2M444.5 464v2M445.5 462v2M450.5 459v2M451.5 457v2M452.5 455v2M456.5 454v2M457.5 456v2M458.5 458v4M459.5 462v6M460.5 468v7M461.5 475v2M462.5 477v2M463.5 479v2M469.5 480v2M470.5 477v3M471.5 473v4M472.5 469v4M473.5 464v5M474.5 460v4M475.5 458v2M476.5 456v2M485.5 455v2M486.5 457v4M487.5 461v7M488.5 468v7M489.5 475v3M490.5 478v2M497.5 476v2M498.5 474v2M499.5 472v2M500.5 470v2M501.5 467v3M502.5 463v4M503.5 460v3M504.5 458v2M505.5 456v2M506.5 454v2M507.5 452v2M510.5 453v4M511.5 457v10M512.5 467v8M513.5 475v2M514.5 477v2M515.5 479v2M549.5 473v2M550.5 468v5M551.5 464v4M552.5 462v2M553.5 460v2M554.5 462v3M555.5 465v5M556.5 470v4M565.5 474v2M568.5 478v2M579.5 479v2M581.5 476v2M582.5 474v2M583.5 471v3M584.5 466v5M585.5 460v6M586.5 456v4M587.5 454v2M590.5 454v4M591.5 458v6M592.5 464v5M593.5 469v4M594.5 473v4M595.5 477v3M596.5 480v3M601.5 480v2M602.5 476v4M603.5 469v7M604.5 463v6M605.5 460v3M606.5 458v2M614.5 458v2M615.5 460v3M616.5 463v5M617.5 468v4M618.5 472v4M619.5 476v2M620.5 478v2M621.5 480v2M629.5 481v2M630.5 474v7M631.5 466v8M632.5 461v5M633.5 456v5M634.5 453v3M641.5 455v4M642.5 459v8M643.5 467v6M644.5 473v4M645.5 477v2M646.5 479v2M647.5 481v2M661.5 480v2M672.5 476v2M673.5 470v6M674.5 463v7M675.5 460v3M676.5 458v2M687.5 451v2M688.5 453v2M689.5 455v5M690.5 460v9M691.5 469v7M692.5 476v2M693.5 478v2M714.5 477v2M715.5 474v3M716.5 470v4M717.5 466v4M718.5 462v4M719.5 458v4M720.5 456v2M721.5 454v2M724.5 454v4M725.5 458v5M726.5 463v3M727.5 466v2M729.5 467v3M730.5 462v5M731.5 459v3M732.5 457v2M736.5 456v2M742.5 456v2M751.5 460v2M753.5 457v2M754.5 455v2M758.5 454v2M759.5 456v4M760.5 460v6M761.5 466v7M762.5 473v3M763.5 476v2M764.5 478v2M769.5 477v5M770.5 453v24M771.5 443v10M772.5 439v4M775.5 442v6M776.5 448v13M777.5 461v15M778.5 476v8M779.5 473v8M780.5 464v9M781.5 458v6M782.5 451v7M783.5 447v4M807.5 450v2M809.5 453v2M810.5 455v4M811.5 459v4M812.5 463v4M813.5 467v4M814.5 471v4M815.5 475v2M816.5 477v2M839.5 480v2M840.5 473v7M841.5 463v10M842.5 457v6M843.5 452v5M844.5 450v2M845.5 448v2M894.5 452v2M896.5 455v2M897.5 457v2M898.5 459v5M899.5 464v6M900.5 470v3M901.5 473v2M902.5 475v2M903.5 477v2M920.5 474v5M921.5 466v8M922.5 461v5M923.5 457v4M924.5 455v2M925.5 453v2M926.5 455v3M927.5 458v7M928.5 465v8M929.5 473v4M930.5 477v2M931.5 479v2M932.5 481v2M940.5 476v3M941.5 471v5M942.5 467v4M943.5 463v4M944.5 459v4M945.5 457v2M947.5 456v2M948.5 458v4M949.5 462v5M950.5 467v7M951.5 474v5M963.5 473v4M964.5 464v9M965.5 458v6M966.5 456v2M967.5 454v2M968.5 452v2M978.5 452v2M979.5 454v2M980.5 456v4M981.5 460v8M982.5 468v5M986.5 472v2M987.5 470v2M988.5 468v2M989.5 463v5M990.5 457v6M991.5 454v3M992.5 452v2M73 482.5h3M236 482.5h17M273 482.5h6M399 482.5h8M431 482.5h2M466 482.5h3M597 482.5h2M622 482.5h7M648 482.5h4M655 482.5h6M701 482.5h10M933 482.5h3M955 482.5h1M76 481.5h1M227 481.5h9M433 481.5h1M464 481.5h2M492 481.5h1M516 481.5h25M570 481.5h9M599 481.5h2M696 481.5h5M711 481.5h1M767 481.5h2M824 481.5h15M936 481.5h1M954 481.5h1M956 481.5h1M87 450.5h1M94 450.5h1M146 450.5h2M169 450.5h1M215 450.5h1M892 450.5h1M970 450.5h1M976 450.5h1M995 450.5h1M88 449.5h2M92 449.5h2M214 449.5h1M806 449.5h1M891 449.5h1M971 449.5h5M90 448.5h2M805 448.5h1M890 448.5h1M106 451.5h1M148 451.5h3M167 451.5h2M508 451.5h1M636 451.5h1M893 451.5h1M969 451.5h1M977 451.5h1M993 451.5h2M107 452.5h1M119 452.5h2M151 452.5h1M509 452.5h1M635 452.5h1M637 452.5h2M686 452.5h1M808 452.5h1M114 475.5h1M133 475.5h1M548 475.5h1M558 475.5h5M127 479.5h3M225 479.5h1M494 479.5h2M543 479.5h2M662 479.5h1M666 479.5h3M713 479.5h1M817 479.5h5M904 479.5h1M917 479.5h2M939 479.5h1M952 479.5h1M959 479.5h1M134 476.5h1M547 476.5h1M566 476.5h1M135 477.5h1M546 477.5h1M567 477.5h1M664 477.5h1M961 477.5h2M136 478.5h2M496 478.5h1M545 478.5h1M580 478.5h1M663 478.5h1M665 478.5h1M669 478.5h3M919 478.5h1M960 478.5h1M152 453.5h1M455 453.5h1M481 453.5h2M639 453.5h1M685 453.5h1M181 441.5h2M199 441.5h3M774 441.5h1M790 441.5h2M187 483.5h2M253 483.5h20M279 483.5h3M390 483.5h9M407 483.5h24M652 483.5h3M193 447.5h1M804 447.5h1M846 447.5h1M882 447.5h3M888 447.5h2M195 444.5h1M207 444.5h3M786 444.5h1M800 444.5h2M856 444.5h3M865 444.5h1M196 443.5h1M204 443.5h3M787 443.5h1M796 443.5h4M197 442.5h2M202 442.5h2M788 442.5h2M792 442.5h4M210 445.5h2M785 445.5h1M802 445.5h1M849 445.5h7M859 445.5h6M866 445.5h2M212 446.5h1M784 446.5h1M803 446.5h1M847 446.5h2M868 446.5h14M885 446.5h3M226 480.5h1M491 480.5h1M493 480.5h1M541 480.5h2M569 480.5h1M694 480.5h2M712 480.5h1M765 480.5h2M822 480.5h2M905 480.5h12M937 480.5h2M953 480.5h1M957 480.5h2M282 484.5h108M438 472.5h2M440 473.5h1M564 473.5h1M983 473.5h2M446 461.5h1M747 461.5h1M447 460.5h3M746 460.5h1M453 454.5h2M479 454.5h2M483 454.5h2M588 454.5h2M640 454.5h1M684 454.5h1M722 454.5h2M755 454.5h3M895 454.5h1M477 455.5h2M609 455.5h2M683 455.5h1M737 455.5h5M557 474.5h1M563 474.5h1M985 474.5h1M607 457.5h1M613 457.5h1M677 457.5h2M681 457.5h1M733 457.5h1M608 456.5h1M611 456.5h2M682 456.5h1M946 456.5h1M679 458.5h2M734 458.5h2M743 458.5h1M728 468.5h1M744 459.5h2M752 459.5h1M748 462.5h1M750 462.5h1M749 463.5h1M773 440.5h1"/>
<path d="M178.5 583v2M179.5 580v3M180.5 574v6M181.5 571v3M185.5 571v2M187.5 574v2M191.5 579v2M770.5 584v3M771.5 579v5M772.5 576v3M773.5 574v2M775.5 571v2M776.5 570v2M777.5 572v2M778.5 574v2M779.5 576v2M65 586.5h112M207 586.5h563M803 586.5h193M177 585.5h1M202 585.5h5M792 585.5h11M182 571.5h1M183 570.5h2M186 573.5h1M774 573.5h1M188 576.5h1M189 577.5h1M190 578.5h1M780 578.5h1M192 581.5h1M783 581.5h1M193 582.5h2M784 582.5h2M195 583.5h2M786 583.5h2M197 584.5h5M788 584.5h4M781 579.5h1M782 580.5h1"/>
<path d="M176.5 686v3M177.5 682v4M178.5 677v5M179.5 674v3M180.5 677v4M181.5 681v4M182.5 685v3M183.5 688v2M185.5 691v2M768.5 683v6M769.5 673v10M770.5 667v6M771.5 670v4M772.5 674v5M773.5 679v5M774.5 684v5M775.5 689v3M65 688.5h111M212 688.5h71M292 688.5h17M312 688.5h9M324 688.5h3M330 688.5h438M801 688.5h195M184 690.5h1M195 690.5h8M787 690.5h8M186 693.5h2M779 693.5h2M188 692.5h2M777 692.5h2M781 692.5h2M190 691.5h5M776 691.5h1M783 691.5h4M203 689.5h9M795 689.5h6M283 687.5h9M309 687.5h3M321 687.5h3M327 687.5h3"/>
</g>
<g font-family="Liberation Sans, sans-serif" font-size="11" fill="#ffffff" text-anchor="end" shape-rendering="auto">
<text x="62" y="82">100</text>
<text x="62" y="120">50</text>
<text x="62" y="159">0</text>
<text x="62" y="197">20</text>
<text x="62" y="237">10</text>
<text x="62" y="277">0</text>
<text x="62" y="294">2</text>
<text x="62" y="340">1</text>
<text x="62" y="387">0</text>
<text x="62" y="400">2</text>
<text x="62" y="446">1</text>
<text x="62" y="493">0</text>
<text x="62" y="547">5K</text>
<text x="62" y="599">0</text>
<text x="62" y="632">200</text>
<text x="62" y="668">100</text>
<text x="62" y="705">0</text>
</g>
<g font-family="Liberation Sans, sans-serif" font-size="19.5" fill="#f6f6f6" stroke="#f6f6f6" stroke-width="0.3" shape-rendering="auto">
<text x="391.5" y="113" textLength="84.8" lengthAdjust="spacingAndGlyphs">Краткоср.</text>
<text x="484.3" y="113" textLength="90.9" lengthAdjust="spacingAndGlyphs">коррекция</text>
<text x="581.3" y="113" textLength="45.7" lengthAdjust="spacingAndGlyphs">топл.</text>
<text x="634.7" y="113">1,</text>
<text x="657.3" y="113">%</text>
<text x="391.5" y="196" textLength="84.8" lengthAdjust="spacingAndGlyphs">Краткоср.</text>
<text x="484.3" y="196" textLength="90.9" lengthAdjust="spacingAndGlyphs">коррекция</text>
<text x="581.3" y="196" textLength="45.7" lengthAdjust="spacingAndGlyphs">топл.</text>
<text x="634.7" y="196">2,</text>
<text x="657.3" y="196">%</text>
<text x="437.6" y="302" textLength="47.2" lengthAdjust="spacingAndGlyphs">Кисл.</text>
<text x="491.8" y="302" textLength="58.3" lengthAdjust="spacingAndGlyphs">датч.2</text>
<text x="554.8" y="302" textLength="57.1" lengthAdjust="spacingAndGlyphs">(пер.),</text>
<text x="618.1" y="302">В</text>
<text x="442.4" y="408" textLength="47.5" lengthAdjust="spacingAndGlyphs">Кисл.</text>
<text x="496.3" y="408" textLength="46.3" lengthAdjust="spacingAndGlyphs">датч.</text>
<text x="549.1" y="408" textLength="57.7" lengthAdjust="spacingAndGlyphs">(пер.),</text>
<text x="613.3" y="408">В</text>
<text x="358.5" y="514" textLength="47.8" lengthAdjust="spacingAndGlyphs">Датч.</text>
<text x="412.7" y="514" textLength="37.1" lengthAdjust="spacingAndGlyphs">угла</text>
<text x="456.6" y="514" textLength="55.4" lengthAdjust="spacingAndGlyphs">повор.</text>
<text x="520.3" y="514" textLength="66.9" lengthAdjust="spacingAndGlyphs">коленч.</text>
<text x="593.9" y="514" textLength="45.9" lengthAdjust="spacingAndGlyphs">вала,</text>
<text x="646.2" y="514" textLength="60.4" lengthAdjust="spacingAndGlyphs">об/мин</text>
<text x="465.9" y="620" textLength="47.2" lengthAdjust="spacingAndGlyphs">Датч.</text>
<text x="521.0" y="620" textLength="42.7" lengthAdjust="spacingAndGlyphs">MAP,</text>
<text x="568.3" y="620" textLength="32.1" lengthAdjust="spacingAndGlyphs">кПа</text>
</g>
<text x="66" y="90" textLength="58" lengthAdjust="spacingAndGlyphs" font-family="Liberation Sans, sans-serif" font-size="19.5" fill="#f4f4f4" shape-rendering="auto">+0.000</text>
<g font-family="Liberation Sans, sans-serif" font-size="14.5" fill="#04fb04" shape-rendering="auto">
<rect x="538" y="131.1" width="35" height="19.5" fill="#000060"/>
<text x="538.5" y="146.6" textLength="34" lengthAdjust="spacingAndGlyphs" stroke="#04fb04" stroke-width="0.12">25.0</text>
<rect x="538" y="201.1" width="35" height="19.5" fill="#000060"/>
<text x="538.5" y="216.6" textLength="34" lengthAdjust="spacingAndGlyphs" stroke="#04fb04" stroke-width="0.12">16.8</text>
<rect x="538" y="363.3" width="45" height="19.5" fill="#000060"/>
<text x="538.5" y="378.8" textLength="44" lengthAdjust="spacingAndGlyphs" stroke="#04fb04" stroke-width="0.12">0.280</text>
<rect x="538" y="474.4" width="45" height="19.5" fill="#000060"/>
<text x="538.5" y="489.9" textLength="44" lengthAdjust="spacingAndGlyphs" stroke="#04fb04" stroke-width="0.12">0.120</text>
<rect x="538" y="580.8" width="30" height="19.5" fill="#000060"/>
<text x="538.5" y="596.3" textLength="29" lengthAdjust="spacingAndGlyphs" stroke="#04fb04" stroke-width="0.12">649</text>
<rect x="538" y="685.4" width="20" height="19.5" fill="#000060"/>
<text x="538.5" y="700.9" textLength="19" lengthAdjust="spacingAndGlyphs" stroke="#04fb04" stroke-width="0.12">29</text>
</g>
<line x1="0" y1="176.5" x2="996" y2="176.5" stroke="#c8c8c8" stroke-width="1"/>
<line x1="0" y1="282.5" x2="996" y2="282.5" stroke="#c8c8c8" stroke-width="1"/>
<line x1="0" y1="388.5" x2="996" y2="388.5" stroke="#c8c8c8" stroke-width="1"/>
<line x1="0" y1="494.5" x2="996" y2="494.5" stroke="#c8c8c8" stroke-width="1"/>
<line x1="0" y1="600.5" x2="996" y2="600.5" stroke="#c8c8c8" stroke-width="1"/>
<rect x="968" y="690" width="28" height="13" fill="#e6e6e6"/><text x="968.3" y="701" font-family="Liberation Sans, sans-serif" font-size="11" fill="#000060" shape-rendering="auto">5 s/div</text>
<path d="M537.5 71V176M537.5 177V282M537.5 283V388M537.5 389V494M537.5 495V600M537.5 601V706" fill="none" stroke="#ffff00" stroke-width="1" stroke-dasharray="3 3"/>
</g></svg>
</body></html>
